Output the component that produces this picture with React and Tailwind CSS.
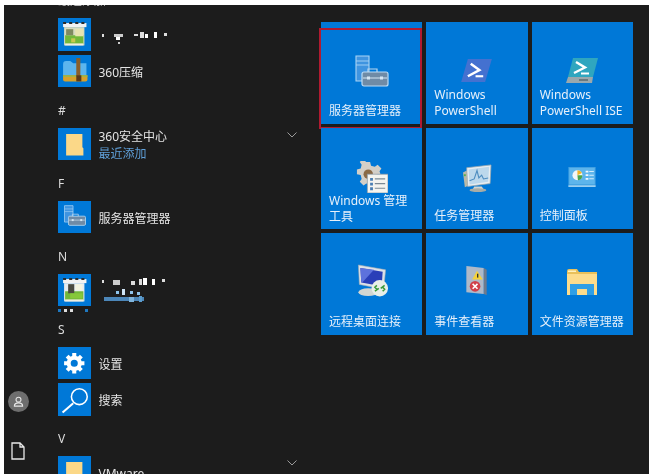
import React from 'react';

// --- Tile / app icons ---
const ServerIcon = () => (
    <svg viewBox="0 0 34 32" className="w-full h-full" fill="none">
        <path d="M1 1h13v25H1z" fill="#3f94e0" stroke="#a9d4f5" strokeWidth="1.1" />
        <path d="M1 6h13M1 10h13" stroke="#a9d4f5" strokeWidth="0.9" />
        <path d="M13 14h9v4h-9z" stroke="#b9d6ee" strokeWidth="1.2" />
        <rect x="7" y="17" width="26" height="14" rx="2" fill="#6f8ba6" stroke="#bcdcf5" strokeWidth="1.2" />
        <path d="M8 23h24" stroke="#d5e6f3" strokeWidth="1" />
        <rect x="12" y="21.5" width="3" height="3" fill="#d5e6f3" />
        <rect x="25" y="21.5" width="3" height="3" fill="#d5e6f3" />
    </svg>
);

const PowerShellIcon = () => (
    <svg viewBox="0 0 32 24" className="w-full h-full">
        <path d="M7 0h25l-7 24H0z" fill="#4471d0" />
        <path d="M10 5l9 6.500L7 18" fill="none" stroke="#fff" strokeWidth="2.600" />
        <path d="M15 18h8" stroke="#fff" strokeWidth="2.200" />
    </svg>
);

const PowerShellIseIcon = () => (
    <svg viewBox="0 0 32 26" className="w-full h-full">
        <path d="M7 0h25l-5 19H2z" fill="#2fa6bf" />
        <path d="M2 19h25l-1 6H0z" fill="#9aa8ad" />
        <path d="M13 22h9" stroke="#4a5a60" strokeWidth="1.200" />
        <path d="M10 4l9 5.500L8 15" fill="none" stroke="#fff" strokeWidth="2.400" />
        <path d="M15 15.500h8" stroke="#fff" strokeWidth="2" />
    </svg>
);

const AdminIcon = () => (
    <svg viewBox="0 0 34 34" className="w-full h-full">
        <path d="M10 1h5l1 4 4 1 3-2 4 4-2 3 1 3H22v14h-6l-1-3-4-1-3 2-4-4 2-3-1-4-4-1v-5l4-1 1-4-2-3 4-4 3 2z" fill="#d3cfc7" />
        <circle cx="13" cy="14" r="5" fill="#8a6a45" />
        <rect x="12" y="14" width="22" height="20" fill="#f4f4ef" stroke="#8e9aa4" strokeWidth="0.8" />
        <path d="M20 19h11M20 24h11M20 29h11" stroke="#7b8a95" strokeWidth="1.2" />
        <path d="M15 18h3v3h-3zM15 23h3v3h-3zM15 28h3v3h-3z" fill="#4b7fb3" />
    </svg>
);

const TaskIcon = () => (
    <svg viewBox="0 0 32 30" className="w-full h-full">
        <path d="M1 9l4-2 2 16-4 2z" fill="#b9b9a8" />
        <path d="M5 4l26-3-1 20-24 3z" fill="#e8eef2" stroke="#9da9ae" strokeWidth="0.8" />
        <path d="M7 6l22-3-1 16-20 3z" fill="#bcd8ec" />
        <path d="M8 18l5-2 3-9 2 8 3-3 2 4 5-1" fill="none" stroke="#4e8dc0" strokeWidth="1.2" />
        <path d="M13 24h8l3 4H11z" fill="#d3d6d1" />
        <ellipse cx="17" cy="28" rx="9" ry="2" fill="#a8aca6" />
        <rect x="2" y="11" width="2" height="2" fill="#57b04a" />
    </svg>
);

const ControlIcon = () => (
    <svg viewBox="0 0 30 22" className="w-full h-full">
        <rect width="30" height="20" fill="#3f9fe0" />
        <rect x="1" y="1" width="28" height="18" fill="#5db5ec" />
        <circle cx="10" cy="9" r="5.5" fill="#f3f6f8" />
        <path d="M10 9V3.5a5.5 5.5 0 0 1 5 3z" fill="#f0b428" />
        <path d="M10 9h5.5a5.5 5.5 0 0 1-5 5.5z" fill="#4aa54a" />
        <path d="M19 4h3v2h-3zM19 8h3v2h-3zM19 12h3v2h-3z" fill="#f3f8fb" />
        <path d="M23 5h5M23 9h5M23 13h5" stroke="#d6edfa" strokeWidth="1.2" />
        <rect y="20" width="30" height="2" fill="#9bd0f0" />
    </svg>
);

const RemoteIcon = () => (
    <svg viewBox="0 0 32 34" className="w-full h-full">
        <path d="M2 1l28 5-2 20-25-5z" fill="#dce2e8" stroke="#a4adb5" strokeWidth="0.6" />
        <path d="M4 4l23 4-1 15-21-4z" fill="#2a3fb8" />
        <path d="M4 4l14 2-12 13H5z" fill="#5d72dc" />
        <ellipse cx="12" cy="29" rx="10" ry="4" fill="#d2d6d2" />
        <circle cx="24" cy="25" r="8.5" fill="#e8eee8" />
        <path d="M19 28l4-3M21 22l-2 2 2 2M29 22l-4 3M27 28l2-2-2-2" fill="none" stroke="#3a9a3a" strokeWidth="1.6" />
    </svg>
);

const EventIcon = () => (
    <svg viewBox="0 0 26 32" className="w-full h-full">
        <path d="M2 1l18 2v27L2 28z" fill="#aeb9c8" />
        <path d="M20 3l3 2v26l-3-1z" fill="#6e7a8c" />
        <path d="M13 6l6 9H8z" fill="#f5d23a" />
        <rect x="13" y="9" width="1.4" height="4" fill="#333" />
        <circle cx="11" cy="22" r="5.5" fill="#d0404a" />
        <path d="M8.5 19.5l5 5M13.5 19.5l-5 5" stroke="#fff" strokeWidth="1.6" />
    </svg>
);

const ExplorerIcon = () => (
    <svg viewBox="0 0 30 26" className="w-full h-full">
        <path d="M0 2q0-2 2-2h8l2 3h18v3H0z" fill="#e9c05a" />
        <rect x="1" y="1.500" width="8" height="1.500" fill="#fdf1bf" />
        <path d="M0 5h30v21H0z" fill="#fcdc8c" />
        <path d="M3 15h24v11h-7v-6h-10v6H3z" fill="#2f9fe6" />
    </svg>
);

// --- List icons ---
const ZipIcon = () => (
    <svg viewBox="0 0 32 32" className="w-full h-full">
        <path d="M5 9q0-3 3-3h4l3 2h13v12H5z" fill="#5cb5ee" />
        <path d="M5 20h24v4q0 2-2 2H7q-2 0-2-2z" fill="#d8a12b" />
        <path d="M5 20h24v1.5H5z" fill="#9ab84a" />
        <rect x="18" y="3" width="4" height="18" fill="#8a5f2a" />
        <rect x="18" y="20" width="5" height="6" fill="#5b3a18" />
    </svg>
);

const FileFolderIcon = () => (
    <svg viewBox="0 0 32 32" className="w-full h-full">
        <path d="M8 6h16v13l1 1v7H8z" fill="#fbd888" />
    </svg>
);

const GearIcon = () => (
    <svg viewBox="0 0 32 32" className="w-full h-full" fill="none" stroke="#fff">
        <circle cx="16" cy="16" r="5.500" strokeWidth="4" />
        <path d="M16 6v4M16 22v4M6 16h4M22 16h4M9 9l3 3M20 20l3 3M23 9l-3 3M12 20l-3 3" strokeWidth="4" />
    </svg>
);

const SearchIcon = () => (
    <svg viewBox="0 0 32 32" className="w-full h-full" fill="none" stroke="#fff" strokeWidth="1.500">
        <circle cx="21" cy="13.500" r="7.800" />
        <path d="M15 20L4.500 29" strokeWidth="2" />
    </svg>
);

// pixelated app icon from the screenshot, blocks instead of real artwork
const MosaicIcon = ({ alt }) => (
    <svg viewBox="0 0 32 32" className="w-full h-full">
        <path d="M5 5h23v4H5z" fill="#f2f2f2" />
        <path d="M5 4h3v2H5zM11 4h3v2h-3zM17 4h3v2h-3zM23 4h3v2h-3z" fill="#2b2b2b" />
        <rect x="6" y="9" width="20" height="18" fill={alt ? '#e6ecf0' : '#d8dcc0'} />
        <rect x="7" y="17" width="18" height="9" fill="#72b83a" />
        {alt ? (
            <>
                <rect x="10" y="10" width="6" height="9" fill="#4a4a40" />
                <rect x="17" y="10" width="7" height="6" fill="#f4f4e0" />
                <rect x="12" y="19" width="12" height="5" fill="#86c83a" />
            </>
        ) : (
            <>
                <rect x="8" y="11" width="7" height="6" fill="#7f8a60" />
                <rect x="17" y="11" width="8" height="7" fill="#e8e4b0" />
                <rect x="13" y="20" width="4" height="4" fill="#c8c850" />
            </>
        )}
        <rect x="7" y="25" width="18" height="2" fill="#f0efe0" />
    </svg>
);

const Dots = ({ blocks, className }) => (
    <svg className={className} viewBox="0 0 80 30">
        {blocks.map(([x, y, w, h, c], i) => <rect key={i} x={x} y={y} width={w} height={h} fill={c} />)}
    </svg>
);

const nameBlocks = [
    [3, 3, 2, 3, '#ddd'], [15, 3, 9, 3, '#ccc'], [17, 6, 4, 3, '#fff'], [19, 11, 2, 2, '#ccc'],
    [35, 3, 4, 2, '#ddd'], [41, 1, 4, 6, '#ddd'], [46, 3, 3, 4, '#fff'], [55, 1, 3, 6, '#fff'], [65, 2, 3, 3, '#ddd'],
];
const nameBlocks2 = [
    [3, 3, 2, 3, '#ddd'], [14, 3, 7, 5, '#ccc'], [32, 4, 4, 4, '#ddd'], [40, 2, 3, 6, '#ddd'], [44, 1, 4, 7, '#fff'],
    [53, 2, 3, 6, '#fff'], [63, 2, 3, 3, '#ddd'],
    [17, 14, 3, 3, '#8fc4ec'], [23, 12, 3, 6, '#cfe4f5'], [31, 14, 3, 3, '#8fc4ec'], [38, 15, 3, 3, '#8fc4ec'],
    [5, 20, 40, 4, '#4c86b8'], [30, 20, 5, 5, '#7fb4dc'], [40, 19, 3, 6, '#5c9ccc'],
];

const Chevron = () => (
    <svg viewBox="0 0 10 6" className="w-[10px] h-[6px]" fill="none" stroke="#9a9a9a" strokeWidth="1">
        <path d="M.5.5L5 5 9.500.5" />
    </svg>
);

const Header = ({ children }) => (
    <div className="h-[36.5px] flex items-center text-[12px] text-[#dcdcdc] pt-[3px]">{children}</div>
);

const Row = ({ icon, children, sub, expandable }) => (
    <div className="h-[36.5px] flex items-start">
        <div className="w-[32.5px] h-[32.5px] shrink-0 bg-[#0078d7]">{icon}</div>
        <div className="ml-[8px] h-[32.5px] pt-[3px] flex-1 flex flex-col justify-center text-[12px] leading-[17px] text-[#e4e4e4]">
            {children}
            {sub && <span className="text-[#5f9fd8]">{sub}</span>}
        </div>
        {expandable && <div className="mt-[4px] mr-[24px]"><Chevron /></div>}
    </div>
);

const Tile = ({ label, children, iconBox, outline }) => (
    <div className="relative h-[101.5px] bg-[#0078d7] flex flex-col items-center">
        <div className={iconBox}>{children}</div>
        <div className="mt-auto self-stretch pl-[8px] pb-[5px] text-[12px] leading-[16px] text-[#e6f0fa] whitespace-pre-line">{label}</div>
        {outline && <div className="absolute -left-[2px] top-[6px] right-0 -bottom-[5px] border-2 border-[#b01a30]" />}
    </div>
);

const tiles = [
    { label: '服务器管理器', icon: <ServerIcon />, box: 'mt-[33px] w-[34px] h-[32px]', outline: true },
    { label: 'Windows\nPowerShell', icon: <PowerShellIcon />, box: 'mt-[37px] w-[31px] h-[23px]' },
    { label: 'Windows\nPowerShell ISE', icon: <PowerShellIseIcon />, box: 'mt-[36px] w-[32px] h-[26px]' },
    { label: 'Windows 管理\n工具', icon: <AdminIcon />, box: 'mt-[33px] w-[32px] h-[32px]' },
    { label: '任务管理器', icon: <TaskIcon />, box: 'mt-[36px] w-[30px] h-[28px]' },
    { label: '控制面板', icon: <ControlIcon />, box: 'mt-[39px] w-[28px] h-[20px]' },
    { label: '远程桌面连接', icon: <RemoteIcon />, box: 'mt-[31px] w-[32px] h-[33px]' },
    { label: '事件查看器', icon: <EventIcon />, box: 'mt-[32px] w-[26px] h-[31px]' },
    { label: '文件资源管理器', icon: <ExplorerIcon />, box: 'mt-[36px] w-[30px] h-[26px]' },
];

export default function App() {
    return (
        <div className="w-[663px] h-[474px] bg-white pl-[4px] pt-[5px] overflow-hidden font-['Noto_Sans','Noto_Sans_CJK_SC',sans-serif]">
            <div className="w-[645px] h-[469px] bg-[#1c1c1c] flex overflow-hidden blur-[0.5px]">
                {/* left rail */}
                <div className="w-[54px] shrink-0 flex flex-col justify-end pl-[4px] pb-[14px]">
                    <div className="w-[21px] h-[21px] rounded-full bg-[#6e6e6e] flex items-center justify-center">
                        <svg viewBox="0 0 12 12" className="w-[11px] h-[11px]" fill="none" stroke="#e8e8e8" strokeWidth="1.200">
                            <circle cx="6" cy="4" r="2.700" />
                            <path d="M1.500 11q0-3.500 4.500-3.500T10.500 11z" />
                        </svg>
                    </div>
                    <svg viewBox="0 0 14 18" className="w-[14px] h-[18px] ml-[3px] mt-[30px]" fill="none" stroke="#e8e8e8" strokeWidth="1.300">
                        <path d="M1 1h8l4 4v12H1zM9 1v4h4" />
                    </svg>
                </div>

                {/* app list */}
                <div className="w-[263px] shrink-0 -mt-[23.5px]">
                    <Header>最近添加</Header>
                    <Row icon={<MosaicIcon />}><Dots blocks={nameBlocks} className="w-[80px] h-[30px] shrink-0 mt-[20px]" /></Row>
                    <Row icon={<ZipIcon />}>360压缩</Row>
                    <Header>#</Header>
                    <Row icon={<FileFolderIcon />} sub="最近添加" expandable>360安全中心</Row>
                    <Header>F</Header>
                    <Row icon={<div className="w-[26px] h-[25px] ml-[4px] pt-[4px]"><ServerIcon /></div>}>服务器管理器</Row>
                    <Header>N</Header>
                    <div className="relative">
                        <Row icon={<MosaicIcon alt />}><Dots blocks={nameBlocks2} className="w-[80px] h-[30px] shrink-0 mt-[1px]" /></Row>
                        <div className="absolute left-0 top-[35px] flex gap-[3px]">
                            <span className="w-[3px] h-[3px] bg-[#1f78c0]" />
                            <span className="w-[3px] h-[3px] bg-[#ddd]" />
                            <span className="w-[3px] h-[3px] bg-[#ddd]" />
                            <span className="w-[3px] h-[3px] ml-[9px] bg-[#1f78c0]" />
                        </div>
                    </div>
                    <Header>S</Header>
                    <Row icon={<GearIcon />}>设置</Row>
                    <Row icon={<SearchIcon />}>搜索</Row>
                    <Header>V</Header>
                    <Row icon={<FileFolderIcon />} expandable>VMware</Row>
                </div>

                {/* tile group */}
                <div className="-mt-[13px]">
                    <div className="h-[30px] pl-[1px] text-[12px] leading-[16px] text-[#dcdcdc]">Windows Server</div>
                    <div className="w-[312px] grid grid-cols-3 gap-[4px]">
                        {tiles.map(t => (
                            <Tile key={t.label} label={t.label} iconBox={t.box} outline={t.outline}>{t.icon}</Tile>
                        ))}
                    </div>
                </div>
            </div>
        </div>
    );
}
